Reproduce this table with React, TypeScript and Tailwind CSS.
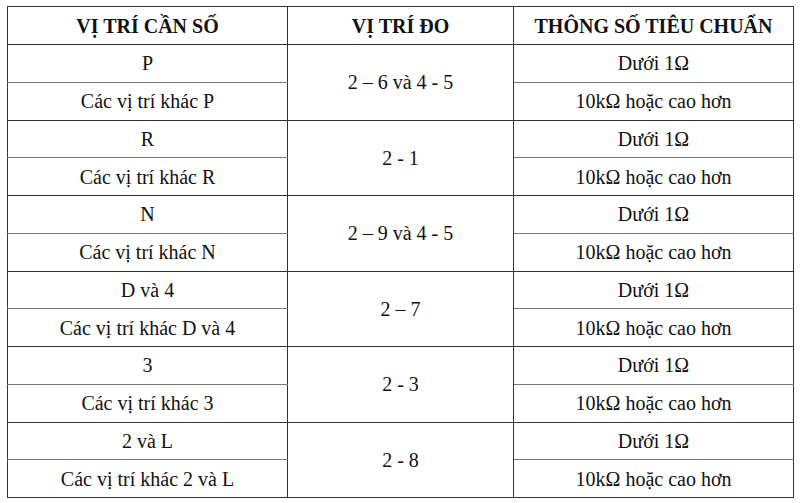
import React from "react";

interface Group {
  first: string;
  other: string;
  point: string;
}

const groups: Group[] = [
  { first: "P", other: "Các vị trí khác P", point: "2 – 6 và 4 - 5" },
  { first: "R", other: "Các vị trí khác R", point: "2 - 1" },
  { first: "N", other: "Các vị trí khác N", point: "2 – 9 và 4 - 5" },
  { first: "D và 4", other: "Các vị trí khác D và 4", point: "2 – 7" },
  { first: "3", other: "Các vị trí khác 3", point: "2 - 3" },
  { first: "2 và L", other: "Các vị trí khác 2 và L", point: "2 - 8" },
];

export default function App() {
  return (
    <div className="w-[800px] h-[503px] bg-white pt-[6px] pl-[7px] [font-family:'Liberation_Serif',serif] text-[20px] text-[#111]">
      <table className="w-[786px] table-fixed border-collapse border border-[#333]">
        <colgroup>
          <col className="w-[280px]" />
          <col className="w-[226px]" />
          <col className="w-[280px]" />
        </colgroup>
        <thead>
          <tr className="h-[38px]">
            <th className="border border-[#333] text-center font-bold">VỊ TRÍ CẦN SỐ</th>
            <th className="border border-[#333] text-center font-bold">VỊ TRÍ ĐO</th>
            <th className="border border-[#333] text-center font-bold">THÔNG SỐ TIÊU CHUẨN</th>
          </tr>
        </thead>
        <tbody>
          {groups.map((g) => (
            <React.Fragment key={g.first}>
              <tr className="h-[37.75px]">
                <td className="border-x border-t border-[#333] border-b border-b-[#777] text-center">{g.first}</td>
                <td rowSpan={2} className="border border-[#333] text-center">{g.point}</td>
                <td className="border-x border-t border-[#333] border-b border-b-[#777] text-center">Dưới 1Ω</td>
              </tr>
              <tr className="h-[37.75px]">
                <td className="border-x border-b border-[#333] text-center">{g.other}</td>
                <td className="border-x border-b border-[#333] text-center">10kΩ hoặc cao hơn</td>
              </tr>
            </React.Fragment>
          ))}
        </tbody>
      </table>
    </div>
  );
}
